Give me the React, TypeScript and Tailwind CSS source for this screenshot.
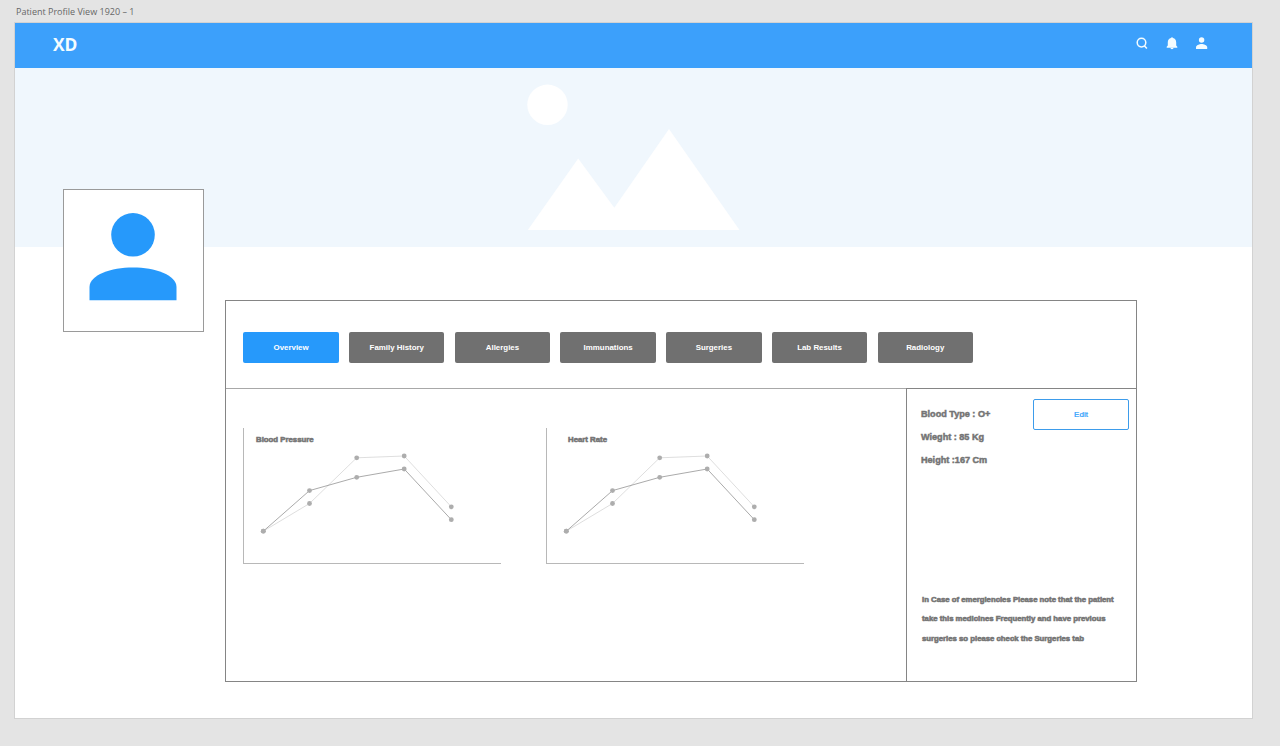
import React from "react";

const tabs = [
  { label: "Overview", active: true },
  { label: "Family History" },
  { label: "Allergies" },
  { label: "Immunations" },
  { label: "Surgeries" },
  { label: "Lab Results" },
  { label: "Radiology" },
];

const lightSeries: [number, number][] = [
  [19.3, 83.2], [65.5, 55.5], [112.7, 9.8], [160.2, 8], [207.3, 58.8],
];
const darkSeries: [number, number][] = [
  [19.3, 83.2], [65.5, 42.6], [112.7, 29.3], [160.2, 21], [207.3, 71.7],
];

const toPoints = (series: [number, number][]) => series.map((p) => p.join(",")).join(" ");

function Chart({ title, titleClass }: { title: string; titleClass: string }) {
  return (
    <section className="flex h-[136px] w-[258px] flex-col border-b border-l border-[#b8b8b8]">
      <h2
        className={`h-5 whitespace-nowrap pt-[2px] text-[7.8px] font-bold leading-5 text-[#707070] [-webkit-text-stroke:0.6px_#787878] ${titleClass}`}
      >
        {title}
      </h2>
      <svg width="240" height="100" viewBox="0 0 240 100" fill="none">
        <polyline points={toPoints(lightSeries)} stroke="#d6d6d6" strokeWidth="0.8" />
        <polyline points={toPoints(darkSeries)} stroke="#949494" strokeWidth="0.8" />
        {[...lightSeries, ...darkSeries].map(([x, y], i) => (
          <circle key={i} cx={x} cy={y} r="2.4" fill="#adadad" />
        ))}
      </svg>
    </section>
  );
}

function Header() {
  return (
    <header className="flex h-[45px] shrink-0 items-start justify-between bg-[#3ca0fb] pl-[38px] pr-[44px] text-[#f4fcff]">
      <span className="pt-[8px] font-['Open_Sans',sans-serif] text-[17.4px] font-bold leading-[26px]">XD</span>
      <div className="flex items-center gap-[17px] pt-[14px]">
        <svg width="13" height="13" viewBox="0 0 13 13" fill="none" stroke="currentColor" strokeWidth="1.5">
          <circle cx="6.5" cy="5.6" r="4.3" />
          <path d="M9.3 8.8 11.9 11.600" />
        </svg>
        <svg width="13" height="13" viewBox="0 0 13 13" fill="currentColor">
          <path d="M7 0.200c.6 0 .9.4 1 .8 2 .5 3.200 2.100 3.200 4.200v3.300l1.100 1.300v1H1.700v-1l1.100-1.300V5.200c0-2.100 1.200-3.700 3.200-4.200.1-.4.4-.8 1-.8Z" />
          <path d="M5.400 10.700h3.200a1.600 1.500 0 0 1-3.200 0Z" />
        </svg>
        <svg width="13" height="13" viewBox="0 0 13 13" fill="currentColor">
          <circle cx="6.600" cy="3" r="2.700" />
          <path d="M1 12v-1.800C1 8.300 4.500 7 6.600 7s5.600 1.300 5.600 3.200V12Z" />
        </svg>
      </div>
    </header>
  );
}

function Cover() {
  return (
    <div className="flex h-[179px] shrink-0 bg-[#f0f7fd] pl-[512px] pt-[16px]">
      <svg width="214" height="148" viewBox="0 0 214 148" fill="#fff">
        <circle cx="20.500" cy="20.800" r="20.200" />
        <path d="M.8 146 51.200 74.500 87.300 123.800 142 45 212.500 146Z" />
      </svg>
    </div>
  );
}

function Sidebar() {
  return (
    <aside className="flex w-[230px] flex-col border-l border-t border-[#858585] text-[#707070]">
      <div className="flex justify-between pl-[14px] pr-[7px] pt-[10px]">
        <div className="pt-[4px] text-[9.100px] font-bold leading-[22.800px] [-webkit-text-stroke:0.500px_#787878]">
          <p className="whitespace-nowrap">Blood Type : O+</p>
          <p className="whitespace-nowrap">Wieght : 85 Kg</p>
          <p className="whitespace-nowrap">Height :167 Cm</p>
        </div>
        <button className="h-[31px] w-[96px] rounded-[2px] border-[1.500px] border-[#3d9ceb] bg-white text-[8px] text-[#2699fb] [-webkit-text-stroke:0.200px_#2699fb]">
          Edit
        </button>
      </div>
      <div className="mt-auto whitespace-nowrap pb-[33px] pl-[15px] text-[7.750px] font-bold leading-[19.300px] [-webkit-text-stroke:0.600px_#787878]">
        <p>In Case of emergiencies Please note that the patient</p>
        <p>take this medicines Frequently and have previous</p>
        <p>surgeries so please check the Surgeries tab</p>
      </div>
    </aside>
  );
}

export default function App() {
  return (
    <div className="h-[746px] w-[1280px] overflow-hidden bg-[#e4e4e4] pl-[14px] font-['Liberation_Sans',Arial,sans-serif]">
      <div className="h-[22px] pl-[2px] font-['Open_Sans',sans-serif] text-[9px] leading-[23px] text-[#666]">
        Patient Profile View 1920 – 1
      </div>
      <div className="flex h-[697px] w-[1239px] flex-col border border-[#d2d2d2] bg-white">
        <Header />
        <Cover />
        <main className="flex items-start pl-[48px]">
          <div className="-mt-[58px] flex h-[143px] w-[141px] shrink-0 justify-center border border-[#9a9a9a] bg-white pt-[23px]">
            <svg width="89" height="88" viewBox="0 0 89 88" fill="#2699fb">
              <circle cx="44" cy="21.800" r="21.800" />
              <path d="M.5 87.200V74C.5 62 22 54.500 44 54.500S87.500 62 87.500 74v13.200Z" />
            </svg>
          </div>
          <div className="ml-[21px] mt-[53px] flex h-[382px] w-[912px] shrink-0 flex-col border border-[#858585]">
            <nav className="flex h-[87px] shrink-0 gap-[10.300px] pl-[17.400px] pt-[31px]">
              {tabs.map((tab) => (
                <button
                  key={tab.label}
                  className={`h-[31px] w-[95.400px] whitespace-nowrap rounded-[2px] text-[7.900px] font-bold text-white ${
                    tab.active ? "bg-[#2699fb]" : "bg-[#707070]"
                  }`}
                >
                  {tab.label}
                </button>
              ))}
            </nav>
            <div className="flex flex-1">
              <div className="flex flex-1 gap-[45px] border-t border-[#a8a8a8] pl-[17px] pt-[39px]">
                <Chart title="Blood Pressure" titleClass="pl-[12px]" />
                <Chart title="Heart Rate" titleClass="pl-[21px]" />
              </div>
              <Sidebar />
            </div>
          </div>
        </main>
      </div>
    </div>
  );
}
